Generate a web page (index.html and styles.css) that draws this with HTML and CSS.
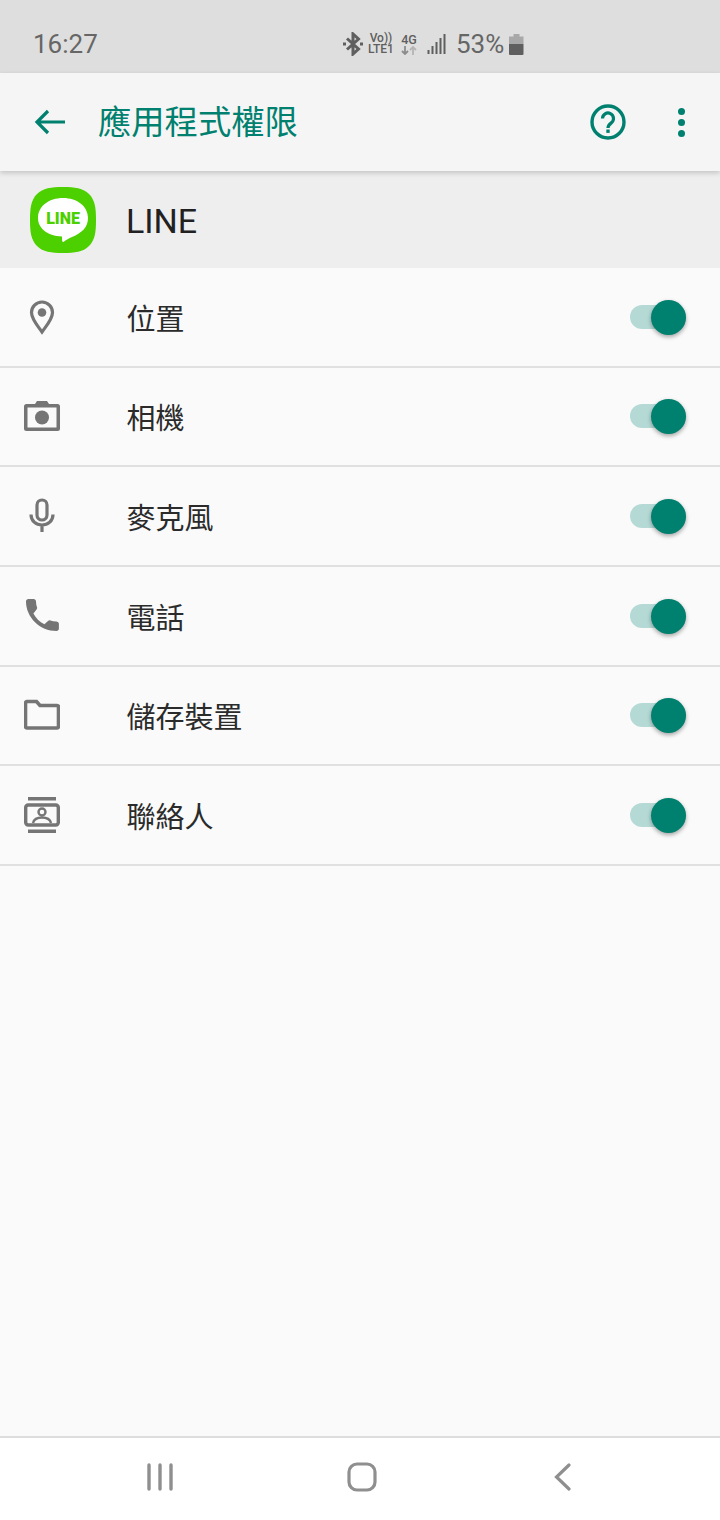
FILE: index.html
```html
<!DOCTYPE html>
<html lang="zh-Hant">

<head>
    <title>應用程式權限</title>
    <link rel="stylesheet" href="styles.css">
</head>

<body>
    <div class="phone">
        <div class="status-bar">
            <span class="time">16:27</span>
            <div class="status-icons">
                <svg class="bt" width="20" height="24" viewBox="0 0 20 24"><path d="M4 6.500l11.500 10.500-5.500 5V2l5.500 5-11.500 10.500" fill="none" stroke="#5f5f5f" stroke-width="3"/><path d="M0 10.500h3v3H0zM17 10.500h3v3h-3z" fill="#5f5f5f"/></svg>
                <div class="net-label"><span>Vo))</span><span>LTE1</span></div>
                <div class="net-4g"><span>4G</span>
                    <svg width="16" height="9" viewBox="0 0 16 9"><path d="M4 0v8M1 5l3 3 3-3" fill="none" stroke="#8c8c8c" stroke-width="1.800"/><path d="M12 9V1M9 4l3-3 3 3" fill="none" stroke="#b5b5b5" stroke-width="1.800"/></svg>
                </div>
                <svg class="signal" width="20" height="20" viewBox="0 0 20 20"><path d="M1.500 20v-4M5.500 20v-8M9.500 20v-12M13.500 20v-16M17.500 20v-20" stroke="#5f5f5f" stroke-width="2"/></svg>
                <span class="battery-text">53%</span>
                <svg class="battery" width="15" height="21" viewBox="0 0 15 21"><path d="M4.500 0h6v2.500h4v7.500h-14.500v-7.500h4.500z" fill="#a8a8a8"/><path d="M0 10h14.500v10a1 1 0 0 1-1 1h-12.500a1 1 0 0 1-1-1z" fill="#5f5f5f"/></svg>
            </div>
        </div>

        <div class="toolbar">
            <svg class="back" width="32" height="26" viewBox="0 0 32 26"><path d="M31 13H3M14 2L3 13l11 11" fill="none" stroke="#00806f" stroke-width="3.200"/></svg>
            <h1>應用程式權限</h1>
            <svg class="help" width="36" height="36" viewBox="0 0 36 36">
                <circle cx="18" cy="18" r="16" fill="none" stroke="#00806f" stroke-width="3.400"/>
                <path d="M12.500 14.500a5.500 5.500 0 1 1 8.800 4.400c-2 1.500-3.300 2.500-3.300 5" fill="none" stroke="#00806f" stroke-width="3.200"/>
                <rect x="16.300" y="25.500" width="3.400" height="3.400" fill="#00806f"/>
            </svg>
            <div class="more"><i></i><i></i><i></i></div>
        </div>

        <div class="app-header">
            <svg class="app-icon" width="68" height="68" viewBox="0 0 68 68">
                <path d="M34 1C46 1 54 2 60 8s7 14 7 26-1 20-7 26-14 7-26 7-20-1-26-7-7-14-7-26S2 14 8 8 22 1 34 1z" fill="#4cd000"/>
                <path d="M34 12c14.500 0 25 8.500 25 20 0 9-6 15-16 19-3 1.200-6 3-8.500 5-1.500 .5-1.500-2-1.500-5.500C18 50 9 42 9 32c0-11.500 10.500-20 25-20z" fill="#fff"/>
                <text x="34" y="37.500" class="app-icon-text">LINE</text>
            </svg>
            <span class="app-name">LINE</span>
        </div>

        <div class="perm-list">
            <div class="perm-row">
                <svg class="perm-icon" width="36" height="36" viewBox="0 0 36 36"><path d="M18 33C13 26 7.500 20 7.500 13.500a10.500 10.500 0 0 1 21 0C28.500 20 23 26 18 33z" fill="none" stroke="#757575" stroke-width="3.200"/><circle cx="18" cy="13.500" r="4.300" fill="#757575"/></svg>
                <span class="perm-name">位置</span>
                <div class="switch"><div class="knob"></div></div>
            </div>
            <div class="perm-row">
                <svg class="perm-icon" width="36" height="36" viewBox="0 0 36 36"><path fill-rule="evenodd" d="M2.500 6H11l2-3h10l2 3h8.500A2.500 2.500 0 0 1 36 8.500v22a2.500 2.500 0 0 1-2.500 2.500h-31A2.500 2.500 0 0 1 0 30.500v-22A2.500 2.500 0 0 1 2.500 6zM3.500 9.500v20h29v-20z" fill="#757575"/><circle cx="18" cy="19.500" r="7" fill="#757575"/></svg>
                <span class="perm-name">相機</span>
                <div class="switch"><div class="knob"></div></div>
            </div>
            <div class="perm-row">
                <svg class="perm-icon" width="36" height="36" viewBox="0 0 36 36"><rect x="13" y="2" width="10" height="20" rx="5" fill="none" stroke="#757575" stroke-width="3.200"/><path d="M7 16.500c0 6.500 5 10.500 11 10.500s11-4 11-10.500M18 27v7" fill="none" stroke="#757575" stroke-width="3.200"/></svg>
                <span class="perm-name">麥克風</span>
                <div class="switch"><div class="knob"></div></div>
            </div>
            <div class="perm-row">
                <svg class="perm-icon" width="36" height="36" viewBox="0 0 36 36"><path d="M2 3.500C2 2 3 1 4.500 1h5C11 1 12 2 12 3.500c0 2 .3 4 1 5.800.3.800.1 1.700-.6 2.400l-3 3.800c2.500 4.800 6 8.300 11 10.700l3.600-3.200c.7-.7 1.600-.9 2.400-.6 1.800.6 3.800 1 5.900 1 1.400 0 2.600 1 2.600 2.400v4.700c0 1.500-1 2.500-2.400 2.500C16 33 2 19.500 2 3.500z" fill="#757575"/></svg>
                <span class="perm-name">電話</span>
                <div class="switch"><div class="knob"></div></div>
            </div>
            <div class="perm-row">
                <svg class="perm-icon" width="36" height="36" viewBox="0 0 36 36"><path d="M3 4.500h9.500l3.500 4h17a1.500 1.500 0 0 1 1.500 1.500v19.500A1.500 1.500 0 0 1 33 31H3a1.500 1.500 0 0 1-1.500-1.500V6A1.500 1.500 0 0 1 3 4.500z" fill="none" stroke="#757575" stroke-width="3.600"/></svg>
                <span class="perm-name">儲存裝置</span>
                <div class="switch"><div class="knob"></div></div>
            </div>
            <div class="perm-row">
                <svg class="perm-icon" width="36" height="36" viewBox="0 0 36 36"><path d="M4 0h28v3.400H4zM4 32.600h28V36H4z" fill="#757575"/><rect x="1.700" y="8" width="32.600" height="20" rx="2.500" fill="none" stroke="#757575" stroke-width="3.400"/><circle cx="18" cy="15" r="3.500" fill="none" stroke="#757575" stroke-width="2.400"/><path d="M9 26c1-4 5-5.500 9-5.500s8 1.500 9 5.500" fill="none" stroke="#757575" stroke-width="2.400"/></svg>
                <span class="perm-name">聯絡人</span>
                <div class="switch"><div class="knob"></div></div>
            </div>
        </div>

        <div class="nav-bar">
            <svg width="26" height="28" viewBox="0 0 26 28"><path d="M2 2v24M13 2v24M24 2v24" stroke="#8f8f8f" stroke-width="3.400" stroke-linecap="round"/></svg>
            <svg width="30" height="30" viewBox="0 0 30 30"><rect x="2" y="2" width="26" height="26" rx="8" fill="none" stroke="#8f8f8f" stroke-width="3.200"/></svg>
            <svg width="20" height="30" viewBox="0 0 20 30"><path d="M18 3L5.500 15 18 27" fill="none" stroke="#8f8f8f" stroke-width="3.200" stroke-linecap="round"/></svg>
        </div>
    </div>
</body>

</html>
```

FILE: styles.css
```css
* {
    box-sizing: border-box;
}

body {
    margin: 0;
    font-family: Roboto, "Noto Sans CJK TC", sans-serif;
    background-color: #fafafa;
}

.phone {
    width: 720px;
    height: 1520px;
    display: flex;
    flex-direction: column;
    overflow: hidden;
}

.status-bar {
    height: 73px;
    flex-shrink: 0;
    background-color: #dedede;
    position: relative;
    display: flex;
    align-items: center;
    padding-left: 33px;
    padding-top: 15px;
}

.time {
    font-size: 26px;
    color: #666666;
}

.status-icons {
    position: absolute;
    left: 343px;
    top: 29px;
    height: 30px;
    display: flex;
    align-items: center;
    color: #5f5f5f;
}

.net-label {
    margin-left: 5px;
    display: flex;
    flex-direction: column;
    font-size: 12px;
    font-weight: 500;
    line-height: 11px;
    text-align: center;
}

.net-4g {
    margin-left: 7px;
    display: flex;
    flex-direction: column;
    align-items: center;
    font-size: 12.500px;
    font-weight: 500;
    line-height: 13px;
}

.signal {
    margin-left: 10px;
}

.battery-text {
    margin-left: 9px;
    font-size: 26px;
    color: #666666;
}

.battery {
    margin-left: 5px;
}

.toolbar {
    height: 98px;
    flex-shrink: 0;
    background-color: #f5f5f5;
    display: flex;
    align-items: center;
    padding-left: 34px;
    box-shadow: 0 2px 5px rgba(0, 0, 0, 0.18);
    position: relative;
    z-index: 1;
}

.toolbar h1 {
    margin: 0 0 5px 32px;
    font-size: 33.300px;
    font-weight: 400;
    color: #00806f;
    font-family: "Noto Sans CJK TC", sans-serif;
}

.help {
    margin-left: auto;
}

.more {
    width: 10px;
    margin: 0 34px 0 50px;
    display: flex;
    flex-direction: column;
    gap: 4px;
}

.more i {
    display: block;
    width: 7px;
    height: 7px;
    border-radius: 50%;
    background-color: #00806f;
    margin: 0 auto;
}

.app-header {
    height: 97px;
    flex-shrink: 0;
    background-color: #eeeeee;
    display: flex;
    align-items: center;
    padding-left: 29px;
}

.app-icon-text {
    font-family: Roboto, sans-serif;
    font-size: 16px;
    font-weight: 900;
    fill: #4cd000;
    text-anchor: middle;
}

.app-name {
    margin: 2px 0 0 29px;
    font-size: 34px;
    color: #212121;
}

.perm-list {
    flex: 1;
    background-color: #fafafa;
}

.perm-row {
    height: 99.670px;
    display: flex;
    align-items: center;
    padding: 0 34px 0 24px;
    border-bottom: 2px solid #e0e0e0;
}

.perm-icon {
    flex-shrink: 0;
}

.perm-name {
    margin-left: 66.500px;
    font-size: 29px;
    color: #2b2b2b;
    font-family: "Noto Sans CJK TC", sans-serif;
}

.switch {
    margin-left: auto;
    width: 56px;
    height: 24px;
    border-radius: 12px;
    background-color: #b5dad6;
    position: relative;
}

.knob {
    position: absolute;
    right: 0;
    top: -5px;
    width: 35px;
    height: 35px;
    border-radius: 50%;
    background-color: #00806f;
    box-shadow: 0 2px 4px rgba(0, 0, 0, 0.35);
}

.nav-bar {
    height: 84px;
    flex-shrink: 0;
    background-color: #ffffff;
    border-top: 2px solid #dedede;
    display: flex;
    align-items: center;
    gap: 174px;
    padding: 0 0 4px 147px;
}
```
